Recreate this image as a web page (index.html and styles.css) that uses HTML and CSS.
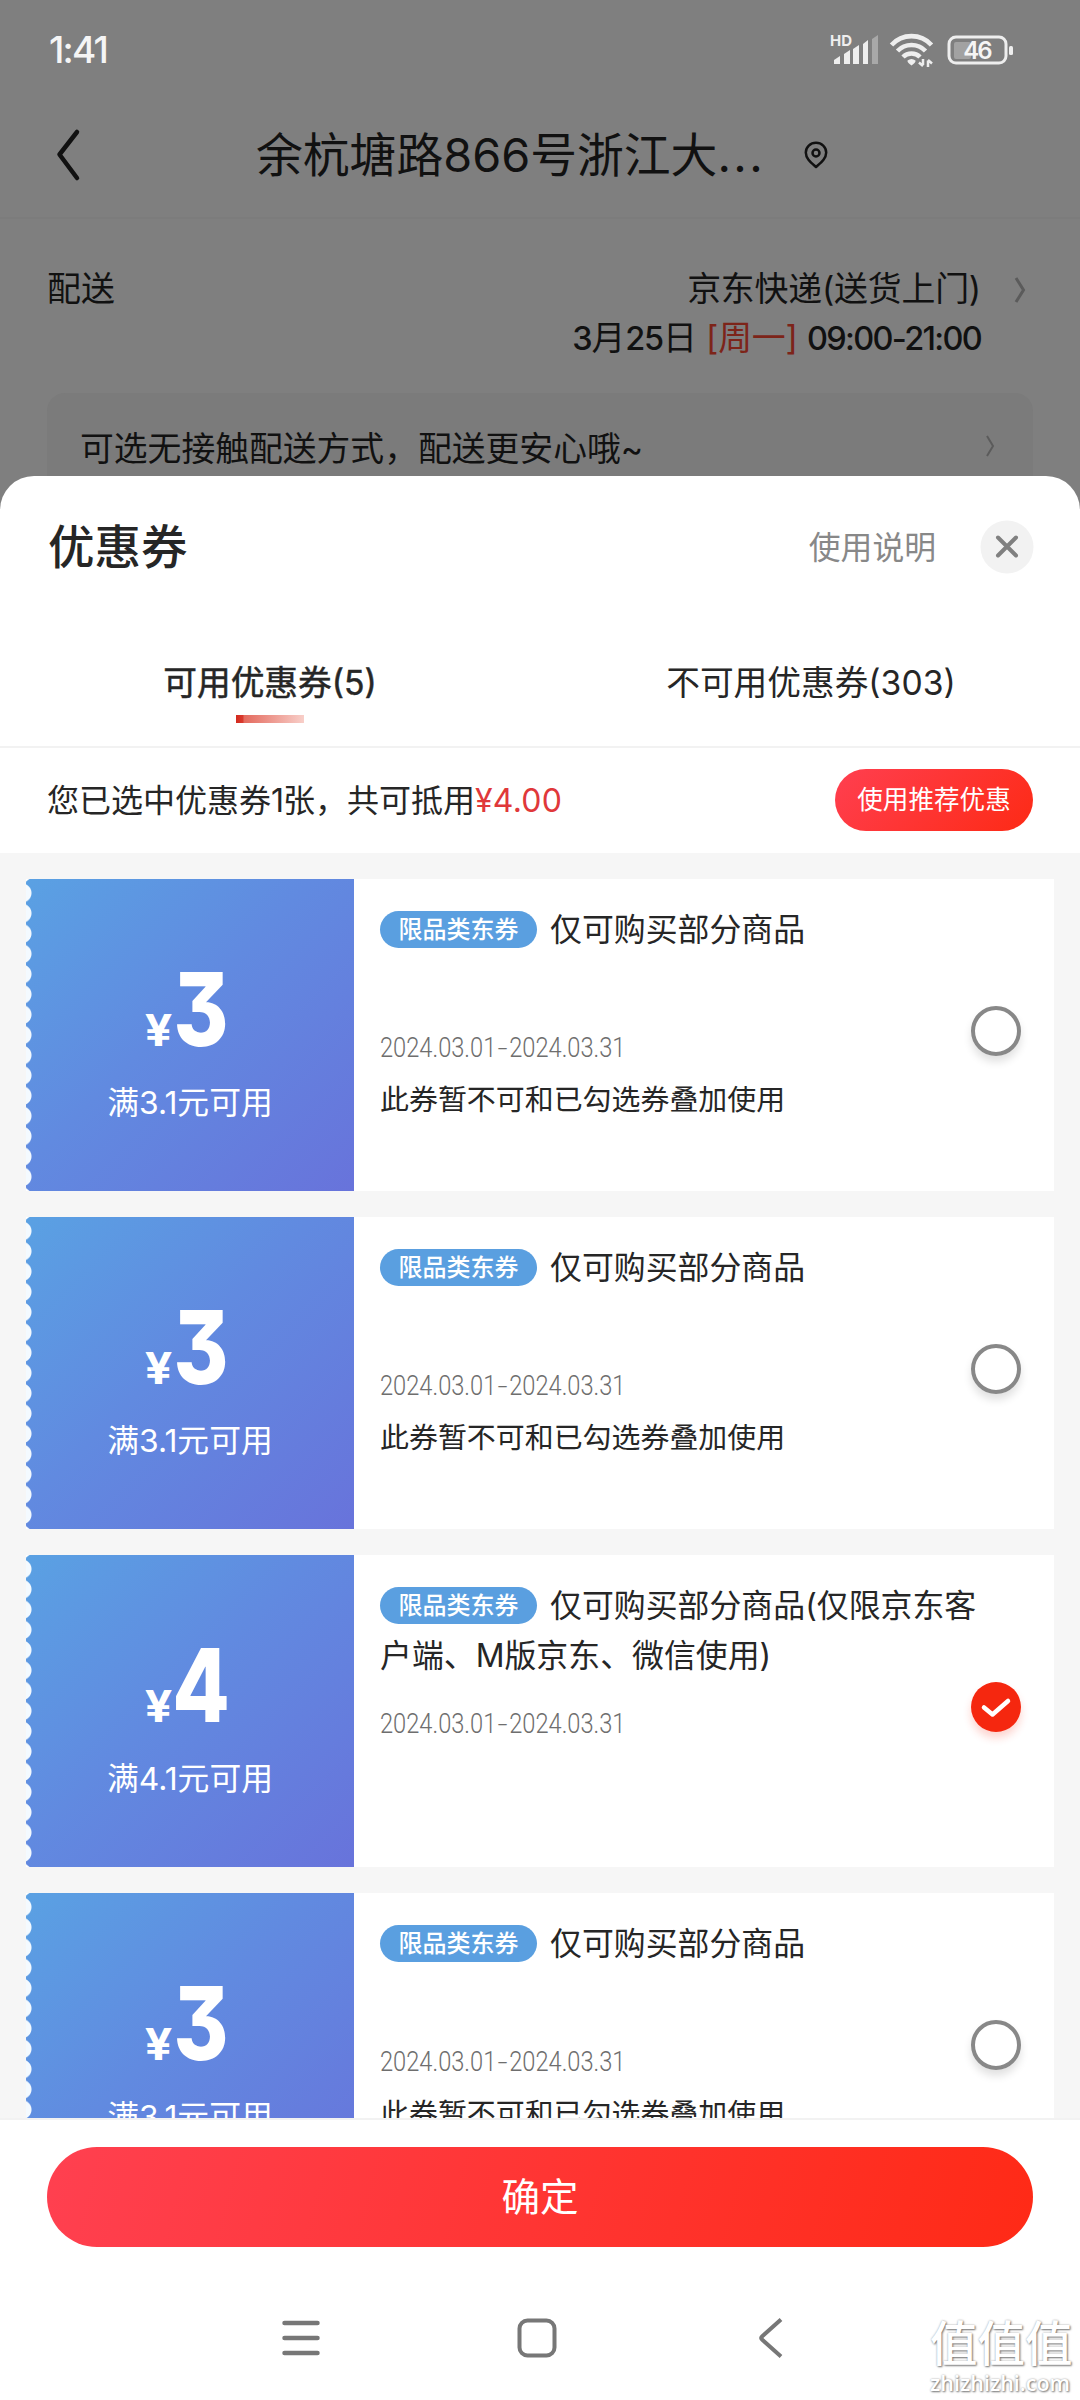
FILE: index.html
```html
<!DOCTYPE html>
<html lang="zh-CN">
<head>
<meta charset="utf-8">
<title>优惠券</title>
<link rel="stylesheet" href="styles.css">
</head>
<body>
<div class="screen">
  <header class="backdrop">
    <div class="status">
      <span class="clock">1:41</span>
      <svg class="status-icons" width="184" height="36" viewBox="0 0 184 36">
        <text x="0" y="15" class="hd">HD</text>
        <g fill="#eee">
          <path d="M4 33v-4l6-4v8zM14 33v-10l6-4v14zM23 33v-15l6-4v19zM33 33v-20l5-4v24z"/>
          <path d="M42 33v-25l6-4v29z" fill="#a8a8a8"/>
        </g>
        <g fill="none" stroke="#eee" stroke-width="4.6">
          <path d="M61.5 14a27 27 0 0 1 40 0"/>
          <path d="M67.500 20a19.500 19.500 0 0 1 28 0"/>
          <path d="M73 26a12 12 0 0 1 17 0"/>
        </g>
        <path d="M77.500 29.500q4-3 8 0q.5 2-4 5q-4.500-3-4-5z" fill="#eee"/>
        <path d="M93 28v6M93 35l-4-3.500M98 36v-6.500M98 29l4 3.500" fill="none" stroke="#eee" stroke-width="2.500"/>
        <rect x="119" y="6" width="57" height="26" rx="7" fill="none" stroke="#eee" stroke-width="3"/>
        <rect x="124" y="11" width="17" height="17" rx="2" fill="#a2a2a2"/>
        <rect x="179" y="15" width="4" height="9" rx="1.500" fill="#eee"/>
        <text x="147" y="27.500" class="charge">46</text>
      </svg>
    </div>
    <div class="address">
      <svg class="back" width="26" height="56" viewBox="0 0 26 56"><path d="M22 5L4.500 27.500L22 51" fill="none" stroke="#111" stroke-width="4.500" stroke-linecap="round" stroke-linejoin="round"/></svg>
      <span class="address-text">余杭塘路866号浙江大<span class="dots">...</span></span>
      <svg class="pin" width="26" height="30" viewBox="0 0 26 30"><path d="M13 27C8 22.500 2.800 18.500 2.800 12.500a10.200 9.700 0 0 1 20.400 0C23.200 18.500 18 22.500 13 27z" fill="none" stroke="#111" stroke-width="2.500" stroke-linejoin="round"/><circle cx="13" cy="13" r="3.500" fill="none" stroke="#111" stroke-width="2.500"/></svg>
    </div>
    <div class="delivery">
      <span class="delivery-label">配送</span>
      <div class="delivery-info">
        <span>京东快递(送货上门)</span>
        <span class="when"><b>3</b>月<b>25</b>日 <i>[周一]</i> <b class="hours">09:00-21:00</b></span>
      </div>
      <svg class="more" width="14" height="28" viewBox="0 0 14 28"><path d="M3 2L10.500 14L3 26" fill="none" stroke="#5b5b5b" stroke-width="3"/></svg>
    </div>
    <div class="notice">
      <span>可选无接触配送方式，配送更安心哦~</span>
      <svg width="10" height="22" viewBox="0 0 10 22"><path d="M2 1L8 11L2 21" fill="none" stroke="#5b5b5b" stroke-width="2"/></svg>
    </div>
  </header>

  <main class="sheet">
    <div class="sheet-head">
      <h1>优惠券</h1>
      <span class="help">使用说明</span>
      <svg class="close" width="54" height="54" viewBox="0 0 54 54"><circle cx="27" cy="27" r="26.500" fill="#f2f2f2"/><path d="M18 17.500L36 35.500M36 17.500L18 35.500" stroke="#808080" stroke-width="4" stroke-linecap="round"/></svg>
    </div>
    <nav class="tabs">
      <div class="tab active">可用优惠券(5)</div>
      <div class="tab">不可用优惠券(303)</div>
    </nav>
    <div class="summary">
      <span class="picked">您已选中优惠券<span class="one">1</span>张，共可抵用<em>¥4.00</em></span>
      <span class="recommend">使用推荐优惠</span>
    </div>

    <section class="list">
      <article class="coupon">
        <div class="face">
          <div class="price"><small>¥</small><strong>3</strong></div>
          <div class="limit">满3.1元可用</div>
        </div>
        <div class="detail">
          <p class="name"><span class="tag">限品类东券</span>仅可购买部分商品</p>
          <p class="date">2024.03.01<span class="dash">-</span>2024.03.31</p>
          <p class="note">此券暂不可和已勾选券叠加使用</p>
        </div>
        <span class="radio"></span>
      </article>
      <article class="coupon">
        <div class="face">
          <div class="price"><small>¥</small><strong>3</strong></div>
          <div class="limit">满3.1元可用</div>
        </div>
        <div class="detail">
          <p class="name"><span class="tag">限品类东券</span>仅可购买部分商品</p>
          <p class="date">2024.03.01<span class="dash">-</span>2024.03.31</p>
          <p class="note">此券暂不可和已勾选券叠加使用</p>
        </div>
        <span class="radio"></span>
      </article>
      <article class="coupon">
        <div class="face">
          <div class="price"><small>¥</small><strong>4</strong></div>
          <div class="limit">满4.1元可用</div>
        </div>
        <div class="detail">
          <p class="name"><span class="tag">限品类东券</span>仅可购买部分商品(仅限京东客<br>户端、M版京东、微信使用)</p>
          <p class="date">2024.03.01<span class="dash">-</span>2024.03.31</p>
        </div>
        <span class="radio checked"><svg width="50" height="50" viewBox="0 0 50 50"><path d="M13 25.500L21.500 32.500L37 19" fill="none" stroke="#fff" stroke-width="4.500" stroke-linecap="round" stroke-linejoin="round"/></svg></span>
      </article>
      <article class="coupon">
        <div class="face">
          <div class="price"><small>¥</small><strong>3</strong></div>
          <div class="limit">满3.1元可用</div>
        </div>
        <div class="detail">
          <p class="name"><span class="tag">限品类东券</span>仅可购买部分商品</p>
          <p class="date">2024.03.01<span class="dash">-</span>2024.03.31</p>
          <p class="note">此券暂不可和已勾选券叠加使用</p>
        </div>
        <span class="radio"></span>
      </article>
    </section>

    <div class="confirm-bar"><div class="confirm">确定</div></div>
    <div class="navbar">
      <svg width="40" height="42" viewBox="0 0 40 42"><path d="M3.500 6h33M3.500 21h33M3.500 36h33" stroke="#777" stroke-width="4.500" stroke-linecap="round"/></svg>
      <svg width="42" height="42" viewBox="0 0 42 42"><rect x="3.500" y="3.500" width="35" height="35" rx="8" fill="none" stroke="#777" stroke-width="4"/></svg>
      <svg width="28" height="42" viewBox="0 0 28 42"><path d="M24 2.500L5 19.500q-1.700 1.500 0 3L24 39.500" fill="none" stroke="#777" stroke-width="4"/></svg>
    </div>
  </main>
  <div class="watermark"><span class="wm-cn">值值值</span><span class="wm-url">zhizhizhi.com</span></div>
</div>
</body>
</html>
```
FILE: styles.css
```css
* { box-sizing: border-box; margin: 0; padding: 0; }
body { background: #7f7f7f; }
svg { display: block; flex: none; }
.screen {
  position: relative;
  width: 1080px;
  height: 2400px;
  overflow: hidden;
  background: #7f7f7f;
  color: #262626;
  font-family: Inter, "Noto Sans CJK SC", sans-serif;
  white-space: nowrap;
}

/* dimmed order page */
.backdrop { height: 476px; color: #111; overflow: hidden; }
.status {
  height: 98px;
  display: flex;
  justify-content: space-between;
  padding: 31px 66px 0 49px;
}
.clock { font: 500 37px/38px Inter, sans-serif; color: #f5f5f5; letter-spacing: -1.8px; }
.hd { font: 700 15px Inter, sans-serif; fill: #eee; }
.charge { font: 600 24px Inter, sans-serif; fill: #f5f5f5; text-anchor: middle; letter-spacing: -2px; }
.address {
  height: 121px;
  display: flex;
  align-items: center;
  padding: 0 55px 5px;
  border-bottom: 2px solid #7c7c7c;
}
.address-text { width: 508px; margin: 0 39px 0 175px; font-size: 46.800px; line-height: 60px; }
.dots { letter-spacing: 2.500px; }
.delivery {
  height: 174px;
  display: flex;
  align-items: flex-start;
  padding: 45px 53px 0 47px;
  font-size: 33.900px;
  line-height: 49px;
}
.delivery-info { margin-left: auto; display: flex; flex-direction: column; align-items: flex-end; letter-spacing: -.2px; }
.when { letter-spacing: -.2px; }
.when b { font-weight: 500; letter-spacing: -1.2px; font-size: 32.500px; }
.when .hours { letter-spacing: -1.700px; }
.when i { font-style: normal; color: #7d2419; }
.more { margin: 12px 0 0 32px; }
.notice {
  height: 120px;
  margin: 0 47px;
  padding: 0 38px 14px 33px;
  display: flex;
  justify-content: space-between;
  align-items: center;
  border-radius: 18px;
  background: #7b7b7b;
  font-size: 33.800px;
}

/* coupon sheet */
.sheet { height: 1924px; border-radius: 34px 34px 0 0; background: #fff; overflow: hidden; }
.sheet-head { height: 141px; display: flex; align-items: center; padding: 0 46px 0 48px; }
h1 { font-size: 46.500px; font-weight: 500; line-height: 60px; }
.help { margin: 0 44px 0 auto; padding-bottom: 4px; font-size: 31.800px; color: #888; }
.tabs { height: 131px; display: flex; border-bottom: 2px solid #f2f2f2; padding-top: 41px; }
.tab { width: 540px; display: flex; flex-direction: column; align-items: center; font-size: 33.700px; line-height: 49px; }
.tab:last-child { padding-left: 2px; }
.active { -webkit-text-stroke: .5px #262626; }
.active::after {
  content: "";
  width: 68px;
  height: 8px;
  margin-top: 8px;
  background: linear-gradient(90deg, #d32a1e 0, #d93a2d 10%, #e46a5e 12%, #f8cfc9 100%);
}
.summary {
  height: 105px;
  display: flex;
  align-items: center;
  justify-content: space-between;
  padding: 0 47px 1px;
  font-size: 32px;
}
.picked { padding-bottom: 4px; }
.one { letter-spacing: -1px; }
.summary em { font-style: normal; color: #e0383a; letter-spacing: .2px; }
.recommend {
  width: 198px;
  height: 62px;
  border-radius: 31px;
  background: linear-gradient(135deg, #ff3f50, #fd2a15);
  color: #fff;
  font-size: 25.600px;
  line-height: 61px;
  text-align: center;
}
.list {
  height: 1265px;
  padding: 26px 26px 0;
  display: flex;
  flex-direction: column;
  gap: 26px;
  background: #f6f6f6;
  overflow: hidden;
}
.coupon { flex: none; height: 312px; display: flex; background: #fff; }
.face {
  width: 328px;
  padding: 70px 0 0;
  color: #fff;
  text-align: center;
  border-radius: 4px 0 0 4px;
  background:
    radial-gradient(circle at -4px 10px, #f4faff 9px, transparent 10px) 0 4px / 12px 20.270px repeat-y,
    linear-gradient(135deg, #5aa1e3, #618ae0 45%, #6873db);
}
.price { display: flex; justify-content: center; align-items: baseline; height: 126px; line-height: 120px; padding-right: 11px; }
.price small { font-size: 44px; font-weight: 700; width: 33px; display: flex; justify-content: center; transform: scaleX(1.1); }
.price strong { font-size: 102px; font-weight: 800; width: 52px; display: flex; justify-content: center; transform: scaleX(.82); font-feature-settings: "cv09"; }
.limit { font-size: 31.800px; line-height: 56px; }
.detail { width: 617px; padding: 26px 0 0 26px; }
.name { height: 118px; font-size: 31.900px; line-height: 50px; }
.tag {
  display: inline-block;
  width: 157px;
  height: 37px;
  margin-right: 13px;
  border-radius: 19px;
  background: #5a9fe0;
  color: #fff;
  font-size: 24px;
  font-weight: 500;
  line-height: 37px;
  text-align: center;
  vertical-align: 3px;
}
.date {
  width: 300px;
  font: 300 27.500px/50px Roboto, sans-serif;
  color: #6e6e6e;
  transform: scaleX(.86);
  transform-origin: left;
}
.dash { display: inline-block; width: 15px; text-align: center; transform: scaleX(1.5); }
.note { font-size: 28.950px; line-height: 53px; }
.radio {
  width: 50px;
  height: 50px;
  margin-top: 127px;
  border: 4px solid #888;
  border-radius: 50%;
  box-shadow: 0 6px 8px rgba(0, 0, 0, .12);
}
.checked { border: 0; background: #f5270f; box-shadow: 0 6px 8px rgba(245, 39, 15, .2); }
.confirm-bar { height: 129px; padding: 27px 47px 0; border-top: 2px solid #f2f2f2; }
.confirm {
  height: 100px;
  border-radius: 50px;
  background: linear-gradient(105deg, #ff4050, #ff2a16);
  color: #fff;
  font-size: 38.500px;
  line-height: 100px;
  text-align: center;
}
.navbar { height: 153px; display: flex; align-items: flex-start; padding: 70px 0 0 281px; gap: 195px; }
.navbar svg:last-child { margin-left: 4px; }

/* overlaid site mark */
.watermark {
  position: absolute;
  left: 930px;
  top: 2316px;
  width: 146px;
  display: flex;
  flex-direction: column;
  color: #fff;
  text-shadow: 1px 1px 2px #777, 0 0 2px #aaa;
}
.wm-cn { font-size: 47.500px; line-height: 55px; font-weight: 500; }
.wm-url { font: 600 21.500px/24px "Open Sans", sans-serif; }
```
